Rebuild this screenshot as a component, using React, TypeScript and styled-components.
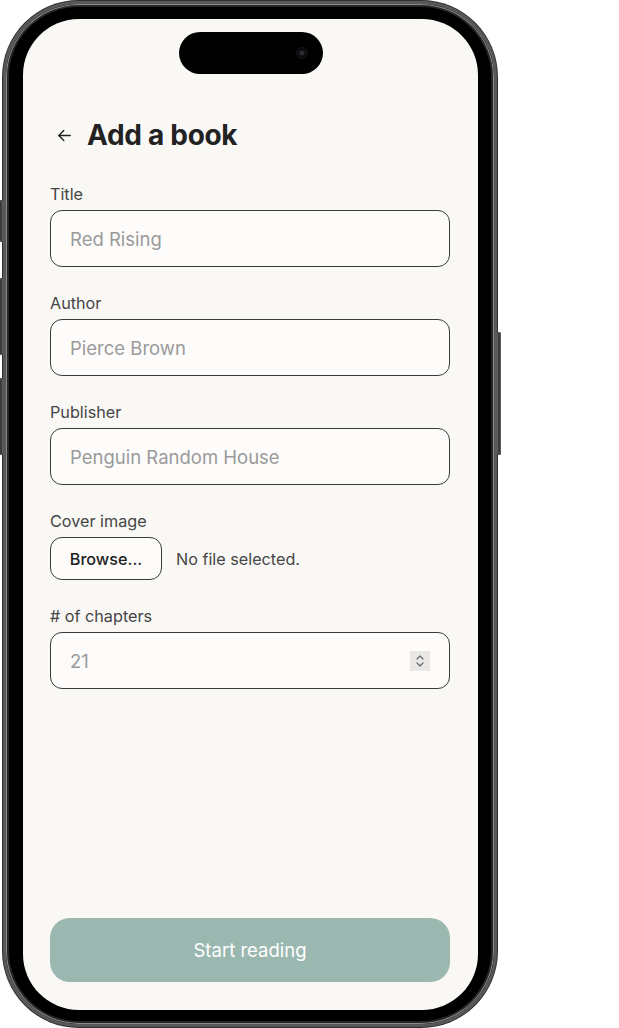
import React from 'react'
import styled, { createGlobalStyle } from 'styled-components'

const GlobalStyle = createGlobalStyle`
  html, body {
    margin: 0;
    padding: 0;
    background: #ffffff;
  }
  body {
    font-family: Inter, "Noto Sans", "Liberation Sans", sans-serif;
    -webkit-font-smoothing: antialiased;
  }
  * {
    box-sizing: border-box;
  }
`

const Page = styled.div`
  width: 619px;
  height: 1028px;
  padding: 1px 0 0 3px;
`

const Phone = styled.div`
  position: relative;
  width: 494px;
  height: 1026px;
  padding: 15px 16px 14px 17px;
  background: #000;
  border: 3px solid #585858;
  border-radius: 76px;
  box-shadow: 0 0 0 1px #2f2f2f, inset 0 0 0 1px #8a8a8a, inset 0 0 0 3px #262626;
`

const SideButton = styled.div<{ $side: 'left' | 'right'; $top: number; $height: number }>`
  position: absolute;
  top: ${p => p.$top}px;
  ${p => (p.$side === 'left' ? 'left: -7px;' : 'right: -7px;')}
  width: 4px;
  height: ${p => p.$height}px;
  background: #3c3c3e;
  border-radius: 2px;
  box-shadow: inset 0 0 0 1px #5c5c5c;
`

const Screen = styled.div`
  height: 100%;
  background: #f9f8f5;
  border-radius: 56px;
  overflow: hidden;
  display: flex;
  flex-direction: column;
  padding: 13px 28px 28px 27px;
`

const Island = styled.div`
  align-self: center;
  width: 144px;
  height: 42px;
  margin-left: 1px;
  border-radius: 21px;
  background: #000;
  display: flex;
  align-items: center;
  justify-content: flex-end;
  padding-right: 15px;
`

const Camera = styled.div`
  width: 12px;
  height: 12px;
  border-radius: 50%;
  background: radial-gradient(circle, #2a2a32 0 2px, #0b0b0e 3px 6px);
  border: 1px solid #161616;
`

const Header = styled.div`
  display: flex;
  align-items: center;
  gap: 14px;
  height: 34px;
  margin-top: 44px;
  margin-bottom: 32px;
`

const BackButton = styled.button`
  border: 0;
  background: none;
  padding: 0;
  margin-left: 6px;
  display: flex;
  color: #222;
  cursor: pointer;
`

const Heading = styled.h1`
  margin: 0;
  font-size: 28px;
  font-weight: 700;
  letter-spacing: -0.3px;
  color: #222;
`

const Form = styled.form`
  display: flex;
  flex-direction: column;
  gap: 26px;
`

const Field = styled.div`
  display: flex;
  flex-direction: column;
  gap: 6px;
`

const Label = styled.label`
  font-size: 16.2px;
  line-height: 20px;
  color: #454545;
`

const TextInput = styled.input`
  height: 57px;
  width: 100%;
  padding: 1px 19px 0;
  border: 1px solid #3a3a3a;
  border-radius: 12px;
  background: #fdfcfa;
  font-family: inherit;
  font-size: 18.5px;
  color: #222;
  outline: none;

  &::placeholder {
    color: #9a9a9a;
  }
`

const FileRow = styled.div`
  display: flex;
  align-items: center;
  gap: 14px;
`

const BrowseButton = styled.button`
  height: 43px;
  width: 112px;
  padding-top: 1px;
  border: 1px solid #3a3a3a;
  border-radius: 12px;
  background: #fdfcfa;
  font-family: inherit;
  font-size: 16.2px;
  font-weight: 500;
  color: #1e1e1e;
`

const FileHint = styled.span`
  font-size: 16.2px;
  padding-top: 1px;
  color: #454545;
`

const NumberBox = styled.div`
  height: 57px;
  display: flex;
  align-items: center;
  padding: 0 19px;
  border: 1px solid #3a3a3a;
  border-radius: 12px;
  background: #fdfcfa;
`

const BareInput = styled.input`
  flex: 1;
  border: 0;
  background: transparent;
  font-family: inherit;
  font-size: 18.5px;
  color: #222;
  outline: none;
  padding: 1px 0 0;

  &::placeholder {
    color: #9a9a9a;
  }
`

const Spinner = styled.span`
  width: 20px;
  height: 20px;
  background: #e9e8e6;
  display: flex;
  align-items: center;
  justify-content: center;
  color: #666;
`

const StartButton = styled.button`
  margin-top: auto;
  height: 64px;
  border: 0;
  border-radius: 20px;
  background: #9ab7b0;
  color: #fff;
  font-family: inherit;
  font-size: 18.5px;
  cursor: pointer;
`

const fields = [
  { id: 'title', label: 'Title', placeholder: 'Red Rising' },
  { id: 'author', label: 'Author', placeholder: 'Pierce Brown' },
  { id: 'publisher', label: 'Publisher', placeholder: 'Penguin Random House' }
]

export default function App() {
  return (
    <Page>
      <GlobalStyle />
      <Phone>
        <SideButton $side="left" $top={196} $height={42} />
        <SideButton $side="left" $top={274} $height={77} />
        <SideButton $side="left" $top={374} $height={77} />
        <SideButton $side="right" $top={328} $height={123} />
        <Screen>
          <Island>
            <Camera />
          </Island>
          <Header>
            <BackButton type="button" aria-label="Back">
              <svg width="17" height="17" viewBox="0 0 24 24" fill="none" stroke="currentColor" strokeWidth="2" strokeLinecap="round" strokeLinejoin="round">
                <path d="M20 12H4" />
                <path d="M11 5l-7 7 7 7" />
              </svg>
            </BackButton>
            <Heading>Add a book</Heading>
          </Header>
          <Form onSubmit={e => e.preventDefault()}>
            {fields.map(f => (
              <Field key={f.id}>
                <Label htmlFor={f.id}>{f.label}</Label>
                <TextInput id={f.id} placeholder={f.placeholder} />
              </Field>
            ))}
            <Field>
              <Label>Cover image</Label>
              <FileRow>
                <BrowseButton type="button">Browse...</BrowseButton>
                <FileHint>No file selected.</FileHint>
              </FileRow>
            </Field>
            <Field>
              <Label htmlFor="chapters"># of chapters</Label>
              <NumberBox>
                <BareInput id="chapters" placeholder="21" />
                <Spinner>
                  <svg width="10" height="14" viewBox="0 0 10 14" fill="none" stroke="currentColor" strokeWidth="1.2" strokeLinecap="round" strokeLinejoin="round">
                    <path d="M2 5l3-3 3 3" />
                    <path d="M2 9l3 3 3-3" />
                  </svg>
                </Spinner>
              </NumberBox>
            </Field>
          </Form>
          <StartButton type="button">Start reading</StartButton>
        </Screen>
      </Phone>
    </Page>
  )
}
